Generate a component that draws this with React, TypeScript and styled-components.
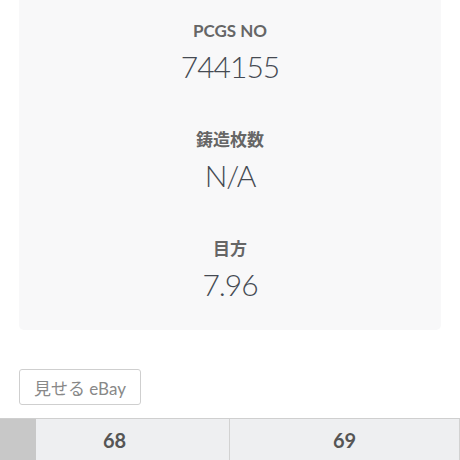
import React from 'react';
import styled, { createGlobalStyle } from 'styled-components';

const GlobalStyle = createGlobalStyle`
  html, body {
    margin: 0;
    padding: 0;
    background: #ffffff;
    font-family: Lato, "Noto Sans CJK JP", sans-serif;
  }
`;

const Page = styled.div`
  width: 460px;
  height: 460px;
  overflow: hidden;
  display: flex;
  flex-direction: column;

  & > * {
    flex-shrink: 0;
  }
`;

const SpecCard = styled.section`
  margin: -20px 19px 0;
  padding: 40px 0 26px;
  background: #f8f8f9;
  border-radius: 0 0 5px 5px;
  display: flex;
  flex-direction: column;
  gap: 43px;
`;

const Spec = styled.div`
  display: flex;
  flex-direction: column;
  align-items: center;
`;

const Label = styled.div`
  font-family: Lato, "Noto Sans CJK JP", sans-serif;
  font-weight: 700;
  font-size: 17px;
  line-height: 22px;
  color: #666666;
`;

const Value = styled.div`
  font-family: Lato, "Noto Sans CJK JP", sans-serif;
  font-weight: 300;
  font-size: 30px;
  line-height: 40px;
  margin-top: 4px;
  letter-spacing: -1px;
  color: #454a52;
`;

const EbayButton = styled.button`
  align-self: flex-start;
  margin: 39px 0 0 19px;
  width: 122px;
  height: 36px;
  padding: 0;
  background: #ffffff;
  border: 1px solid #cfcfcf;
  border-radius: 3px;
  font-family: Lato, "Noto Sans CJK JP", sans-serif;
  font-size: 17px;
  color: #888888;
`;

const GradeRow = styled.div`
  position: relative;
  margin-top: 13px;
  display: grid;
  grid-template-columns: 1fr 1fr;
  border-top: 1px solid #cfcfcf;
  background: #eeeff1;
`;

const StickyShade = styled.div`
  position: absolute;
  left: 0;
  top: 0;
  bottom: 0;
  width: 36px;
  background: #c8c8c8;
`;

const GradeCell = styled.div`
  height: 42px;
  display: flex;
  align-items: center;
  justify-content: center;
  border-right: 1px solid #d2d2d2;
  font-family: Lato, sans-serif;
  font-weight: 700;
  font-size: 20px;
  color: #555555;

  &:last-child {
    border-right: none;
  }
`;

const specs = [
  { label: 'PCGS NO', value: '744155' },
  { label: '鋳造枚数', value: 'N/A' },
  { label: '目方', value: '7.96' },
];

const grades = ['68', '69'];

export default function App() {
  return (
    <Page>
      <GlobalStyle />
      <SpecCard>
        {specs.map((s) => (
          <Spec key={s.label}>
            <Label>{s.label}</Label>
            <Value>{s.value}</Value>
          </Spec>
        ))}
      </SpecCard>
      <EbayButton>見せる eBay</EbayButton>
      <GradeRow>
        {grades.map((g) => (
          <GradeCell key={g}>{g}</GradeCell>
        ))}
        <StickyShade />
      </GradeRow>
    </Page>
  );
}
